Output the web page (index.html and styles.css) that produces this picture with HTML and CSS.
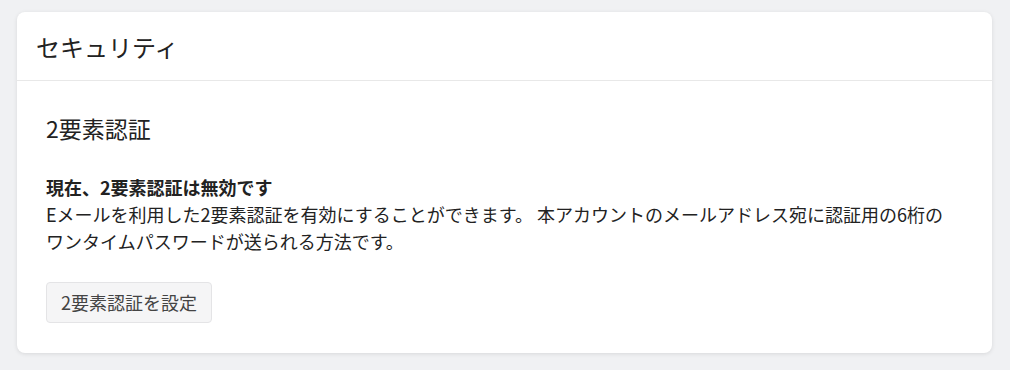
FILE: index.html
```html
<!DOCTYPE html>
<html lang="ja">
<head>
  <meta charset="UTF-8">
  <meta name="viewport" content="width=device-width, initial-scale=1.0">
  <title>セキュリティ</title>
  <link rel="stylesheet" href="styles.css">
</head>
<body>
<div class="card">
  <div class="card-header">
    <h1>セキュリティ</h1>
  </div>
  <div class="card-body">
    <h2>2要素認証</h2>
    <p class="status">現在、2要素認証は無効です</p>
    <p class="desc">Eメールを利用した2要素認証を有効にすることができます。 本アカウントのメールアドレス宛に認証用の6桁のワンタイムパスワードが送られる方法です。</p>
    <button type="button">2要素認証を設定</button>
  </div>
</div>
</body>
</html>
```

FILE: styles.css
```css
body {
  font-family: "Noto Sans CJK JP", "Noto Sans", sans-serif;
  margin: 0;
  padding: 12px 18px 18px 17px;
  background-color: #f0f1f3;
  color: #222;
}
.card {
  background: white;
  border-radius: 8px;
  box-shadow: 0 1px 4px rgba(0,0,0,0.1);
}
.card-header {
  height: 68px;
  padding: 0 19px;
  display: flex;
  align-items: center;
  border-bottom: 1px solid #e8e8e8;
}
h1 {
  margin: 0;
  font-size: 24px;
  font-weight: normal;
}
.card-body {
  padding: 30px 44px 30px 29px;
}
h2 {
  margin: 0 0 29px;
  font-size: 23px;
  font-weight: normal;
  line-height: 34px;
}
.status {
  margin: 0;
  font-size: 18px;
  font-weight: bold;
  line-height: 27px;
}
.desc {
  margin: 0 0 27px;
  font-size: 18px;
  line-height: 27px;
}
button {
  background: #f5f5f6;
  color: #444;
  border: 1px solid #e4e4e6;
  padding: 6px 14px 7px;
  border-radius: 4px;
  font-family: inherit;
  font-size: 18px;
  line-height: 26px;
  cursor: pointer;
}
```
